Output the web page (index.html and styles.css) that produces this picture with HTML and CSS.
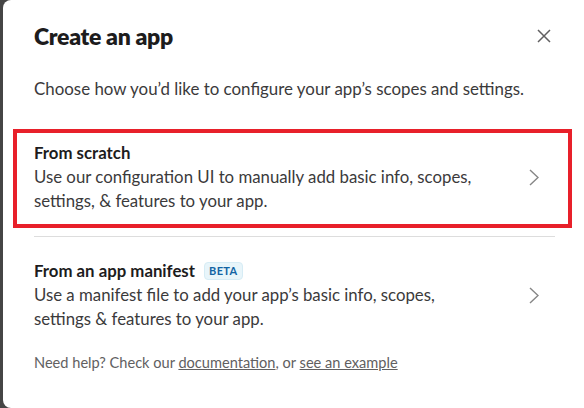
FILE: index.html
```html
<!DOCTYPE html>
<html>
<head>
<meta charset="utf-8">
<link rel="stylesheet" href="styles.css">
</head>
<body>
<div class="modal">
  <div class="header">
    <h1 class="title">Create an app</h1>
    <button class="close" aria-label="Close">
      <svg width="14" height="14" viewBox="0 0 14 14"><path d="M1 1 L13 13 M13 1 L1 13" stroke="#616061" stroke-width="1.5" fill="none"/></svg>
    </button>
  </div>
  <p class="subtitle">Choose how you’d like to configure your app’s scopes and settings.</p>
  <div class="options">
    <div class="option highlighted">
      <div class="option-text">
        <div class="option-title">From scratch</div>
        <div class="option-desc">Use our configuration UI to manually add basic info, scopes, settings, &amp; features to your app.</div>
      </div>
      <svg class="chevron" width="10" height="17" viewBox="0 0 10 17"><path d="M1 1 L9 8.5 L1 16" stroke="#868686" stroke-width="1.4" fill="none"/></svg>
    </div>
    <div class="divider"></div>
    <div class="option">
      <div class="option-text">
        <div class="option-title">From an app manifest <span class="badge">BETA</span></div>
        <div class="option-desc">Use a manifest file to add your app’s basic info, scopes, settings &amp; features to your app.</div>
      </div>
      <svg class="chevron" width="10" height="17" viewBox="0 0 10 17"><path d="M1 1 L9 8.5 L1 16" stroke="#868686" stroke-width="1.4" fill="none"/></svg>
    </div>
  </div>
  <p class="help">Need help? Check our <a href="#">documentation</a>, or <a href="#">see an example</a></p>
</div>
</body>
</html>
```
FILE: styles.css
```css
html, body {
  margin: 0;
  padding: 0;
  background: #454545;
  height: 408px;
  overflow: hidden;
}
.modal {
  margin-left: 3px;
  height: 408px;
  box-sizing: border-box;
  background: #ffffff;
  border-radius: 8px 0 0 8px;
  padding: 21px 29px 0 31px;
  font-family: Lato, "Noto Sans", sans-serif;
  color: #1d1c1d;
}
.header {
  display: flex;
  align-items: center;
  justify-content: space-between;
}
.title {
  margin: 0;
  font-size: 23px;
  line-height: 30px;
  font-weight: 800;
  letter-spacing: -0.3px;
}
.close {
  border: 0;
  background: none;
  padding: 0;
  margin-right: 4px;
  width: 14px;
  height: 14px;
  display: flex;
}
.subtitle {
  margin: 27px 0 0;
  font-size: 16.9px;
  line-height: 22px;
  color: #3b3a3b;
}
.options {
  margin-top: 29px;
}
.option {
  display: flex;
  align-items: center;
  justify-content: space-between;
  margin: 0 -17px 0 -21px;
  padding: 8px 29px 11px 17px;
  border: 4px solid transparent;
}
.option.highlighted {
  border-color: #e8202a;
}
.option-title {
  font-size: 16.8px;
  line-height: 24px;
  font-weight: 700;
  display: flex;
  align-items: center;
}
.option-desc {
  font-size: 16.8px;
  line-height: 24px;
  color: #3b3a3b;
  max-width: 450px;
}
.badge {
  margin-left: 9px;
  font-size: 11px;
  line-height: 16px;
  font-weight: 700;
  color: #1264a3;
  background: #e8f5fa;
  border: 1px solid #d6ecf5;
  border-radius: 4px;
  padding: 0 4px;
  letter-spacing: 0.4px;
}
.chevron {
  flex: none;
}
.divider {
  height: 1px;
  background: #dddddd;
  margin: 8px 0 10px;
}
.help {
  margin: 7px 0 0;
  font-size: 14.6px;
  line-height: 20px;
  color: #616061;
}
.help a {
  color: #616061;
}
```
